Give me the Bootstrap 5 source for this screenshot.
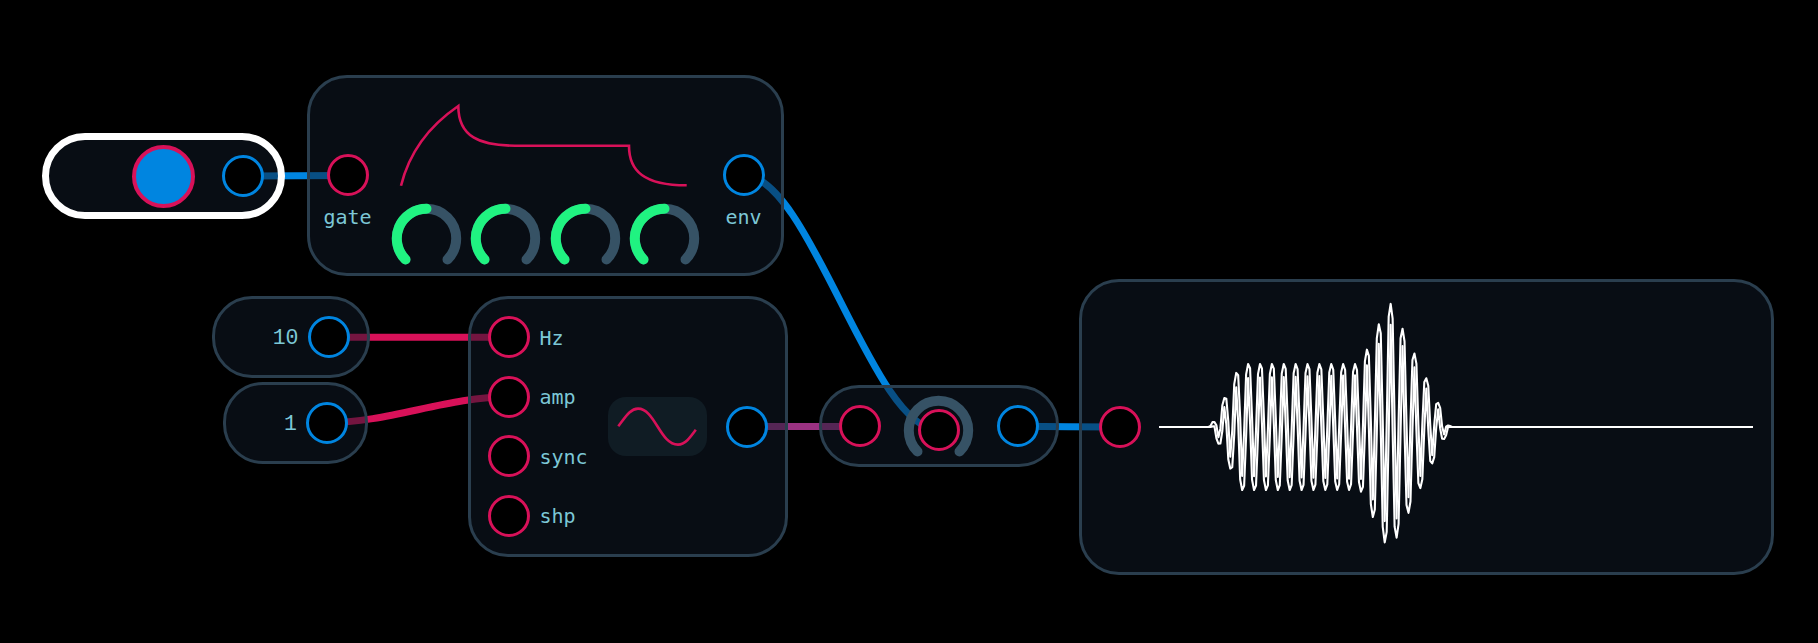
<!DOCTYPE html>
<html lang="en">
<head>
<meta charset="utf-8">
<title>Modular patch</title>
<link rel="stylesheet" href="https://cdn.jsdelivr.net/npm/bootstrap@5.3.0/dist/css/bootstrap.min.css">
<style>
:root{--pink:#d81159;--blue:#0085e0;--line:#2a3e4e;--track:#365265;--green:#20f381;--ink:#7cc7d6}
body{background:#000;color:var(--ink);font:21.5px/24px "Liberation Mono",monospace;height:643px}
.tag{font:20px/24px "DejaVu Sans Mono",monospace;padding-top:1px}
.value{padding-top:2px}
.patch{width:1818px;height:643px}
.module{position:absolute;left:var(--x);top:var(--y);width:var(--w);height:var(--h);border:3px solid var(--line);border-radius:40px;background:rgba(16,26,40,.5)}
.module.selected{border:7px solid #fff;border-radius:43px}
.port{width:42px;height:42px;border:3px solid var(--blue);border-radius:50%;background:#000;flex:none}
.port.in{border-color:var(--pink)}
.trigger{width:63px;height:63px;border:4px solid var(--pink);border-radius:50%;background:var(--blue)}
.side{width:75px;padding-top:76px;gap:8px}
.stage{width:311px;padding-top:20px}
.stroke{fill:none;stroke:var(--pink);stroke-width:2.6}
.knob path{fill:none;stroke:var(--track);stroke-width:10;stroke-linecap:round}
.knob path.level{stroke:var(--green)}
.wave{width:99px;height:59px;border-radius:18px;background:#101c24}
.cables path{fill:none;stroke-width:7}
.scope-line{fill:none;stroke:#fff;stroke-width:2.1;stroke-linejoin:round}
svg{display:block;overflow:visible}
</style>
</head>
<body class="overflow-hidden">
<main class="patch position-relative overflow-hidden">
  <svg class="cables position-absolute top-0 start-0" width="1818" height="643">
    <g stroke="#0085e0">
      <path d="M243 176 C278 176 313 175.5 348 175.5"/>
      <path d="M743.3 175 C810 175 872 430 938.7 430"/>
      <path d="M1018 426.3 C1052 426.3 1086 427 1120 427"/>
    </g>
    <g stroke="#d81159">
      <path d="M329.7 337.3H509.3"/>
      <path d="M327 422.7 C389 422.7 447 396.7 509.3 396.7"/>
    </g>
    <path d="M746.7 426.4H859.3" stroke="#9b3282"/>
  </svg>

  <section class="module selected d-flex align-items-center justify-content-end" style="--x:41.5px;--y:133px;--w:243.5px;--h:86.4px;gap:26.5px;padding-right:14.5px">
    <div class="trigger"></div>
    <div class="port"></div>
  </section>

  <section class="module d-flex justify-content-between" style="--x:307px;--y:75px;--w:477px;--h:200.5px">
    <div class="side d-flex flex-column align-items-center"><div class="port in"></div><span class="tag">gate</span></div>
    <div class="stage d-flex flex-column align-items-center">
      <svg width="307" height="106" viewBox="392 98 307 106">
        <path class="stroke" d="M401 185.8Q413 137 458.3 106C458.3 137 480 145.7 515 145.7H629C629 171 644 185.3 686.7 185.3"/>
      </svg>
      <div class="d-flex" style="gap:10.1px">
        <svg class="knob" width="69" height="69" viewBox="-34.5 -34.5 69 69"><path d="M-21 21A29.7 29.7 0 1 1 21 21"/><path class="level" d="M-21 21A29.7 29.7 0 0 1 0 -29.7"/></svg>
        <svg class="knob" width="69" height="69" viewBox="-34.5 -34.5 69 69"><path d="M-21 21A29.7 29.7 0 1 1 21 21"/><path class="level" d="M-21 21A29.7 29.7 0 0 1 0 -29.7"/></svg>
        <svg class="knob" width="69" height="69" viewBox="-34.5 -34.5 69 69"><path d="M-21 21A29.7 29.7 0 1 1 21 21"/><path class="level" d="M-21 21A29.7 29.7 0 0 1 0 -29.7"/></svg>
        <svg class="knob" width="69" height="69" viewBox="-34.5 -34.5 69 69"><path d="M-21 21A29.7 29.7 0 1 1 21 21"/><path class="level" d="M-21 21A29.7 29.7 0 0 1 0 -29.7"/></svg>
      </div>
    </div>
    <div class="side d-flex flex-column align-items-center"><div class="port"></div><span class="tag">env</span></div>
  </section>

  <section class="module d-flex align-items-center justify-content-end" style="--x:211.5px;--y:296px;--w:158.5px;--h:82px;gap:9.5px;padding-right:17px">
    <span class="value">10</span><div class="port"></div>
  </section>
  <section class="module d-flex align-items-center justify-content-end" style="--x:223px;--y:382px;--w:145px;--h:82px;gap:9px;padding-right:17px">
    <span class="value">1</span><div class="port"></div>
  </section>

  <section class="module d-flex align-items-center justify-content-between" style="--x:468.4px;--y:296px;--w:319.4px;--h:261px;padding:0 16.5px 0 17px">
    <div class="d-flex flex-column" style="gap:17.4px">
      <div class="d-flex align-items-center" style="gap:9px"><div class="port in"></div><span class="tag">Hz</span></div>
      <div class="d-flex align-items-center" style="gap:9px"><div class="port in"></div><span class="tag">amp</span></div>
      <div class="d-flex align-items-center" style="gap:9px"><div class="port in"></div><span class="tag">sync</span></div>
      <div class="d-flex align-items-center" style="gap:9px"><div class="port in"></div><span class="tag">shp</span></div>
    </div>
    <div class="d-flex align-items-center" style="gap:19px">
      <div class="wave"><svg width="99" height="59" viewBox="608 396.7 99 59"><path class="stroke" d="M618.3 426C625 417.5 630 408.3 638 408.3C655 408.3 660 444.3 678 444.3C685 444.3 690 437.5 695.8 429.5"/></svg></div>
      <div class="port"></div>
    </div>
  </section>

  <section class="module d-flex align-items-center justify-content-between" style="--x:819px;--y:385px;--w:239.5px;--h:82px;padding:0 17px 0 16.5px">
    <div class="port in"></div>
    <div class="position-relative d-flex justify-content-center">
      <svg class="knob" width="69" height="61" viewBox="-34.5 -34.5 69 61"><path d="M-21 21A29.7 29.7 0 1 1 21 21"/></svg>
      <div class="port in position-absolute" style="top:13.5px"></div>
    </div>
    <div class="port"></div>
  </section>

  <section class="module d-flex align-items-center justify-content-between" style="--x:1079px;--y:279px;--w:695.4px;--h:296px;padding:0 18.2px 0 17px">
    <div class="port in"></div>
    <svg width="594" height="270" viewBox="1159 292 594 270"><path class="scope-line" id="lower"/><path class="scope-line" id="upper"/></svg>
  </section>
</main>
<script src="https://cdn.jsdelivr.net/npm/bootstrap@5.3.0/dist/js/bootstrap.bundle.min.js"></script>
<script>
// Oscilloscope: each bucket keeps the highest and lowest sample of the enveloped sine.
const envelope = [[1211,0],[1240.7,63],[1360.3,63],[1389.5,125.5],[1449.5,0]];
function level(x){
  for(let i=1;i<envelope.length;i++){
    const [a,p]=envelope[i-1],[b,q]=envelope[i];
    if(x>=a&&x<=b) return p+(q-p)*(x-a)/(b-a);
  }
  return 0;
}
const signal = x => level(x)*Math.cos(2*Math.PI*(x-1248.3)/11.865);
const upper=[], lower=[], step=1.98, reach=1.08;
for(let x=1159;x<=1754;x+=step){
  let hi=-999, lo=999;
  for(let k=-8;k<=8;k++){const v=signal(x+k*reach/8);hi=Math.max(hi,v);lo=Math.min(lo,v);}
  upper.push(x.toFixed(2)+' '+(427-hi).toFixed(2));
  lower.push(x.toFixed(2)+' '+(427-lo).toFixed(2));
}
document.getElementById('upper').setAttribute('d','M'+upper.join('L'));
document.getElementById('lower').setAttribute('d','M'+lower.join('L'));
</script>
</body>
</html>
